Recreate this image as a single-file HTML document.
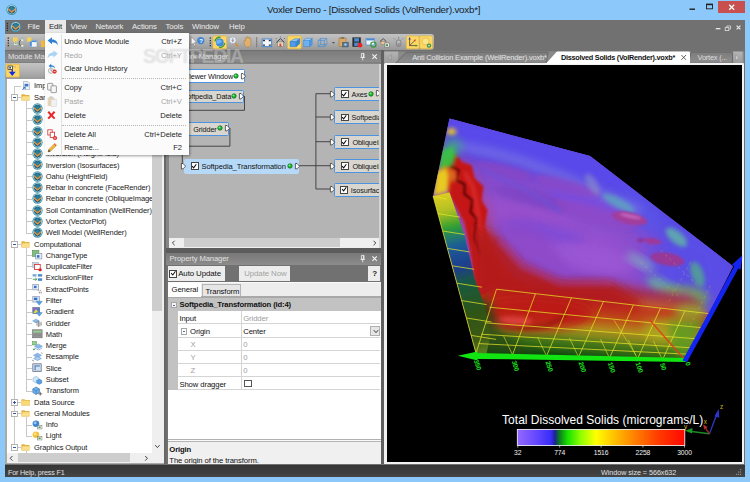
<!DOCTYPE html>
<html>
<head>
<meta charset="utf-8">
<title>Voxler Demo - [Dissolved Solids (VolRender).voxb*]</title>
<style>
html,body{margin:0;padding:0;background:#8cc8f9;}
body{width:750px;height:482px;overflow:hidden;position:relative;font-family:"Liberation Sans",sans-serif;font-size:7.5px;letter-spacing:-0.1px;color:#1a1a1a;}
#win{position:absolute;left:0;top:0;width:750px;height:482px;background:#8cc8f9;overflow:hidden;}
.abs{position:absolute;}
.t{position:absolute;white-space:nowrap;line-height:10px;height:10px;margin-top:0.7px;}
svg{position:absolute;overflow:visible;}
#client{position:absolute;left:5px;top:19.5px;width:740px;height:457px;background:#717171;}
#title{position:absolute;left:267px;top:3px;font-size:9.8px;letter-spacing:-0.22px;line-height:13px;color:#1c1c1c;white-space:nowrap;}
#menubar .t{color:#ececec;top:21.5px;font-size:7.8px;letter-spacing:-0.1px;}
#toolbar{position:absolute;left:5px;top:34px;width:429px;height:16px;background:linear-gradient(#c2c2c2,#b0b0b0 50%,#989898);border-radius:0 3px 3px 0;}
.ptitle{position:absolute;height:13.4px;background:linear-gradient(#686868 0,#7c7c7c 10%,#8c8c8c 92%,#727272 100%);}
.ptitle .t{top:1.4px;color:#e2e2e2;font-size:7.6px;}
#status{position:absolute;left:5px;top:464.5px;width:740px;height:12.2px;background:linear-gradient(#343434,#454545);}
#status .t{color:#e0e0e0;top:1.5px;}
/* tree */
#tree{position:absolute;left:7px;top:79px;width:145px;height:373.5px;background:#fff;overflow:hidden;}
#tree .t{color:#1a1a1a;}
.ln{position:absolute;background:#c8c8c8;}
.exp{position:absolute;width:4.5px;height:4.5px;border:0.6px solid #b4b4b4;background:#fff;}
.exp i{position:absolute;left:1px;top:1.95px;width:2.5px;height:0.7px;background:#3a55a0;}
.exp b{position:absolute;left:1.9px;top:1px;width:0.7px;height:2.5px;background:#3a55a0;}
/* nodes */
.node{position:absolute;height:11.5px;border:0.8px solid #4d94e0;border-radius:1.5px;background:#d9d6cf;}
.node .t{top:1px;color:#111;font-size:7.25px;}
.cb{position:absolute;width:6.2px;height:5.8px;border:0.6px solid #444;background:#fff;}
/* prop grid */
.prow{position:absolute;left:178px;width:202px;height:13.2px;border-bottom:0.6px solid #d4d4d4;box-sizing:border-box;background:#fff;}
/* menu */
#editmenu{position:absolute;left:45px;top:33px;width:144.4px;height:122.4px;background:#fbfbfb;box-shadow:1.2px 1.2px 2.5px rgba(0,0,0,0.4);}
#editmenu .t{color:#1e1e1e;font-size:7.6px;letter-spacing:-0.05px;}
#editmenu .dis{color:#a6a6a6;}
.msep{position:absolute;left:17px;width:124px;height:0;border-top:0.7px dotted #b8b8b8;}
</style>
</head>
<body>
<div id="win">
<div id="title">Voxler Demo - [Dissolved Solids (VolRender).voxb*]</div>
<div class="abs" style="left:717.6px;top:0.8px;width:27.8px;height:12px;background:#c8504e;"></div>
<svg style="left:0;top:0" width="750" height="20" viewBox="0 0 750 20"><rect x="689.5" y="8.5" width="5.5" height="1.4" fill="#1e1e1e"/><rect x="706.5" y="4.2" width="6" height="4.6" fill="none" stroke="#1e1e1e" stroke-width="0.9"/><rect x="706.2" y="3.8" width="6.6" height="1.4" fill="#1e1e1e"/><path d="M729.2 4.8l5 5M734.2 4.8l-5 5" stroke="#fff" stroke-width="1.3" fill="none"/></svg>
<div id="client"></div>
<svg width="0" height="0" style="left:0;top:0"><defs>
<symbol id="logo" viewBox="0 0 12 12"><circle cx="6" cy="6" r="5.6" fill="#3b93a9"/><circle cx="6" cy="6" r="4.7" fill="#cfe6ec"/><circle cx="6" cy="6" r="4" fill="#1f5d80"/><path d="M6 1.9L9.6 5.4 6 8.4 2.4 5.4z" fill="#2a7f9c"/><path d="M2.2 4.3L6 7.6 9.8 4.3 9.8 6.2 6 9.6 2.2 6.2z" fill="#ec9338"/><path d="M3.4 8.2L6 10.3 8.6 8.2 6 10.9z" fill="#173f66"/></symbol>
<symbol id="fold" viewBox="0 0 10 8"><path d="M0.4 1.2h3.2l0.8 0.9h5v5.5h-9z" fill="#e8b84a"/><path d="M0.4 2.9h9v4.7h-9z" fill="#f8d978"/><path d="M0.4 7.6h9" stroke="#d9a437" stroke-width="0.5"/></symbol>
<symbol id="foldo" viewBox="0 0 10 8"><path d="M0.4 1.2h3.2l0.8 0.9h4.4v5.5h-8.4z" fill="#e3b043"/><path d="M1.6 3.4h8.2l-1.2 4.2h-8.2z" fill="#fbe08a"/><path d="M0.4 7.6h8.2" stroke="#d9a437" stroke-width="0.5"/></symbol>
<symbol id="m1" viewBox="0 0 11 10"><rect x="0.5" y="0.5" width="6.5" height="6" fill="#7fbf7a" stroke="#4d8a48" stroke-width="0.6"/><rect x="3.8" y="3.4" width="6.3" height="5.8" fill="#e8eef8" stroke="#6f7f95" stroke-width="0.6"/><rect x="5" y="5.2" width="2.6" height="2.6" fill="#2f6fd0"/></symbol>
<symbol id="m2" viewBox="0 0 11 10"><rect x="0.6" y="0.6" width="6" height="5" fill="#c9d6e8" stroke="#8b9bb3" stroke-width="0.5"/><rect x="2.6" y="2.6" width="5.8" height="5" fill="#fff" stroke="#d83a3a" stroke-width="0.9"/><circle cx="8.3" cy="8" r="1.7" fill="#e02020"/></symbol>
<symbol id="m3" viewBox="0 0 11 10"><rect x="0.6" y="1.2" width="4" height="2.4" fill="#7aa7d8"/><rect x="6" y="1.2" width="4.4" height="2.4" fill="#4f86c9"/><rect x="6" y="5.4" width="4.4" height="2.6" fill="#4f86c9"/><path d="M0.8 6.4h4M3.4 5l1.6 1.4-1.6 1.4" stroke="#3a9a45" stroke-width="0.9" fill="none"/></symbol>
<symbol id="m4" viewBox="0 0 11 10"><rect x="0.8" y="0.6" width="5.8" height="5.4" fill="#e4ebf5" stroke="#7c8aa0" stroke-width="0.6"/><rect x="2" y="1.8" width="2.6" height="2.4" fill="#2f6fd0"/><path d="M6 6.5h1M8 6.5h1M7.5 7.8v2M9.3 7.8v2" stroke="#555" stroke-width="0.7"/></symbol>
<symbol id="m5" viewBox="0 0 11 10"><rect x="0.8" y="0.6" width="6.8" height="5.6" fill="#d8e2f0" stroke="#7c8aa0" stroke-width="0.6"/><rect x="2" y="1.7" width="3.4" height="2.4" fill="#2f6fd0"/><path d="M4.2 5.4h6.4L7.4 9.4z" fill="#5aa0e0" stroke="#3b78ba" stroke-width="0.4"/></symbol>
<symbol id="m6" viewBox="0 0 11 10"><rect x="0.8" y="0.6" width="7" height="6" fill="#5a7fc0" stroke="#50607a" stroke-width="0.6"/><path d="M1.4 6l2.6-4 3 4z" fill="#e8d84a"/><rect x="1.4" y="1.2" width="2.4" height="2" fill="#b05ac8"/><path d="M4.4 5.6h6.2L7.5 9.4z" fill="#5aa0e0" stroke="#3b78ba" stroke-width="0.4"/></symbol>
<symbol id="m7" viewBox="0 0 11 10"><path d="M0.6 3l3.4-2 3.4 2-3.4 2z" fill="#8bbbe8" stroke="#5a8cc4" stroke-width="0.4"/><path d="M5.2 3.6v4.4M6.6 2.8v6.4M8 3.4v5.2M9.4 4.4v3.2" stroke="#666" stroke-width="0.7"/></symbol>
<symbol id="m8" viewBox="0 0 11 10"><rect x="0.6" y="0.8" width="9.8" height="8.2" fill="#9a9a9a" stroke="#666" stroke-width="0.6"/><rect x="1.4" y="1.8" width="8.2" height="1.8" fill="#8fd08a"/><path d="M1.2 5.2h8.6M1.2 7h8.6" stroke="#777" stroke-width="0.6"/></symbol>
<symbol id="m9" viewBox="0 0 11 10"><rect x="0.6" y="0.6" width="4" height="3.4" fill="#8fd08a" stroke="#4d8a48" stroke-width="0.5"/><path d="M2.6 5.4l4-2.2 4 2.2-4 2.2z" fill="#8bbbe8" stroke="#4f86c9" stroke-width="0.5"/><path d="M2.6 7l4 2.2 4-2.2" fill="none" stroke="#4f86c9" stroke-width="0.6"/><path d="M1 8.6h2M2 7.6v2" stroke="#2a8a35" stroke-width="0.7"/></symbol>
<symbol id="m10" viewBox="0 0 11 10"><path d="M1.6 3.4l4-2.2 4 2.2-4 2.2z" fill="#8bbbe8" stroke="#4f86c9" stroke-width="0.5"/><path d="M1.6 6.6l4-2.2 4 2.2-4 2.2z" fill="#a9cdf0" stroke="#4f86c9" stroke-width="0.5"/><path d="M0.6 8l0.8 1.6M9.6 0.6l1 1.2" stroke="#333" stroke-width="0.7"/></symbol>
<symbol id="m11" viewBox="0 0 11 10"><rect x="0.8" y="0.8" width="8.6" height="8" fill="#d0d6e0" stroke="#5c6880" stroke-width="0.7"/><rect x="2.6" y="2.4" width="5.4" height="5" fill="#4f86c9"/><rect x="3.8" y="3.6" width="4.4" height="4" fill="#cfe0f4"/></symbol>
<symbol id="m12" viewBox="0 0 11 10"><path d="M1 3l3-1.8 3 1.8v3.4l-3 1.8-3-1.8z" fill="#cfe4f6" stroke="#7fb0dc" stroke-width="0.5"/><path d="M4.8 5.6l2.6-1.4 2.6 1.4v2.6L7.4 9.6 4.8 8.2z" fill="#5aa0e0" stroke="#3b78ba" stroke-width="0.5"/></symbol>
<symbol id="m13" viewBox="0 0 11 10"><path d="M0.8 3l3.4-2 3.4 2v3.6l-3.4 2-3.4-2z" fill="#6fb0e6" stroke="#2f6fb0" stroke-width="0.6"/><path d="M0.8 3l3.4 2 3.4-2M4.2 5v3.6" stroke="#2f6fb0" stroke-width="0.5" fill="none"/><path d="M6.4 8h4M8.4 6v4" stroke="#333" stroke-width="0.7"/></symbol>
<symbol id="m14" viewBox="0 0 11 10"><circle cx="4" cy="3.8" r="3.4" fill="#3f86d0"/><circle cx="3.2" cy="3" r="1.4" fill="#9cc8f0"/><rect x="5.6" y="5.4" width="4.6" height="3.8" fill="#f4f4f4" stroke="#666" stroke-width="0.5"/><rect x="6.6" y="6.6" width="2.2" height="1.6" fill="#4a9a50"/></symbol>
<symbol id="m15" viewBox="0 0 11 10"><circle cx="4" cy="3.8" r="3.4" fill="#f2c23a"/><circle cx="3.2" cy="3" r="1.4" fill="#fbe28a"/><rect x="5.6" y="5.4" width="4.6" height="3.8" fill="#f4f4f4" stroke="#666" stroke-width="0.5"/><rect x="6.6" y="6.6" width="2.2" height="1.6" fill="#4a9a50"/></symbol>
<symbol id="imp" viewBox="0 0 9 10"><path d="M1.6 0.5h4.6l2 2v6.8h-6.6z" fill="#eef2f8" stroke="#8c9ab0" stroke-width="0.6"/><rect x="2.8" y="3" width="4" height="2.8" fill="#3b78c8"/><path d="M0.4 9.2l3-2.6M3.4 8.6V6.6H1.4" stroke="#2f6fd0" stroke-width="1" fill="none"/></symbol>
</defs></svg>
<div id="menubar">
<div class="abs" style="left:44.5px;top:20px;width:21.5px;height:13.5px;background:#e9e9e9;"></div>
<svg style="left:6px;top:21.5px" width="3" height="10" viewBox="0 0 3 10"><path d="M1.4 1v8" stroke="#2a2a2a" stroke-width="1.2" stroke-dasharray="1.3 1"/></svg>
<svg style="left:10px;top:20.8px" width="11.4" height="11.4"><use href="#logo" width="11.4" height="11.4"/></svg>
<span class="t" style="left:27.5px">File</span>
<span class="t" style="left:70.5px">View</span>
<span class="t" style="left:95.5px">Network</span>
<span class="t" style="left:132px">Actions</span>
<span class="t" style="left:165.5px">Tools</span>
<span class="t" style="left:192px">Window</span>
<span class="t" style="left:229px">Help</span>
<span class="t" style="left:49px;color:#1a1a1a">Edit</span>
</div>
<svg style="left:6px;top:4.2px" width="11.4" height="11.4"><use href="#logo" width="11.4" height="11.4"/></svg>
<svg style="left:712px;top:22px" width="32" height="12" viewBox="712 22 32 12"><rect x="715.8" y="28" width="4.6" height="1.3" fill="#e8e8e8"/><rect x="725.2" y="27.6" width="3.6" height="3" fill="none" stroke="#e0e0e0" stroke-width="0.8"/><path d="M726.8 27.4v-1.4h3.8v3h-1.6" fill="none" stroke="#e0e0e0" stroke-width="0.8"/><path d="M736.6 25.6l3.8 3.8M740.4 25.6l-3.8 3.8" stroke="#ececec" stroke-width="1.1"/></svg>
<div id="toolbar"></div>
<svg style="left:0;top:30px" width="440" height="24" viewBox="0 30 440 24">
<path d="M8.3 37.4v9.4" stroke="#2c2c2c" stroke-width="1.3" stroke-dasharray="1.4 1.1"/>
<rect x="13" y="37.4" width="4.6" height="4.2" fill="#f6d254"/><rect x="13.8" y="42.4" width="3.8" height="2.8" fill="#eef5ee" stroke="#8a9a8a" stroke-width="0.4"/><rect x="14.6" y="43.3" width="2.2" height="0.9" fill="#4f9f55"/><path d="M21 40.2c-2.2 0-2.2 5.6 0 5.6" fill="none" stroke="#555" stroke-width="0.9"/><rect x="21" y="39" width="2.6" height="2.4" fill="#e8f0e8" stroke="#8a9a8a" stroke-width="0.4"/><rect x="21" y="44.6" width="2.6" height="2.4" fill="#e8f0e8" stroke="#8a9a8a" stroke-width="0.4"/>
<rect x="29.4" y="40.2" width="7.6" height="6.8" fill="#f2f6fb" stroke="#8a93a3" stroke-width="0.6"/><rect x="29.8" y="40.5" width="6.8" height="1.6" fill="#4a90e0"/><rect x="29.8" y="42" width="2" height="4.6" fill="#4a90e0"/><rect x="27" y="37.4" width="4.4" height="4.2" fill="#f6d254"/>
<rect x="41" y="40.5" width="4" height="6.5" fill="#f0b840"/>
<path d="M191.2 36.8v8.2l2-1.8 1.4 3 1.2-0.6-1.4-2.9h2.6z" fill="#f4f4f4" stroke="#555" stroke-width="0.4"/>
<circle cx="200.8" cy="40.6" r="3.6" fill="#3f86d4"/><text x="199.2" y="42.8" font-size="6" font-weight="bold" fill="#fff" font-family="Liberation Sans,sans-serif">?</text>
<path d="M210.3 37.4v9.4" stroke="#2c2c2c" stroke-width="1.3" stroke-dasharray="1.4 1.1"/>
<rect x="213" y="35.9" width="13.6" height="12.9" rx="1.2" fill="#fdd765" stroke="#e2b63c" stroke-width="0.7"/>
<circle cx="219.8" cy="42.4" r="3.9" fill="#3f8be0"/><path d="M216.6 40.8c1.6-1.6 4-1.4 5.4 0.4c-1.2 2-3.6 3.2-5.6 2.2z" fill="#6fb4f2"/><path d="M215 41.6c0-3 3-4.8 5.6-4.2M224.6 43c0 3-3 4.8-5.6 4.2" stroke="#2f9a3d" stroke-width="1.3" fill="none"/>
<path d="M234.6 42.6l3.6 4.2" stroke="#d98a30" stroke-width="1.6"/><circle cx="232.8" cy="40.2" r="3.4" fill="#f2f6fa" stroke="#9aa4b4" stroke-width="0.8"/><path d="M232.8 38.2v1.2M232.8 41v1.2M231.4 40.2h2.8" stroke="#445" stroke-width="0.7"/>
<path d="M244 42.2c-1-1.4 0.6-2.2 1.4-1v-3c0-1 1.4-1 1.4 0v-0.8c0-1 1.4-1 1.4 0v0.6c0-1 1.4-1 1.4 0v0.8c0-0.9 1.3-0.9 1.3 0v4.6c0 2-1 3.6-3.4 3.6s-2.6-1.6-3.5-4.8z" fill="#e0b070" stroke="#a87838" stroke-width="0.5"/>
<path d="M256.7 37v10.4" stroke="#666" stroke-width="0.7"/>
<rect x="262.2" y="39" width="9.4" height="7.6" fill="#f4f8fc" stroke="#4a88d0" stroke-width="1"/><path d="M263 39.8h2v1.4h-2zM268.8 39.8h2v1.4h-2zM263 44.4h2v1.4h-2zM268.8 44.4h2v1.4h-2z" fill="#333"/>
<path d="M276.4 42.4l4-3.8 4 3.8" fill="none" stroke="#444" stroke-width="1"/><rect x="277.6" y="42" width="5.6" height="4.6" fill="#f0e0c8" stroke="#7a6a58" stroke-width="0.5"/><rect x="279.4" y="43.6" width="2" height="3" fill="#c84a30"/><path d="M275.6 38l1 1M285 38l-1 1M280.4 36.4v1.2" stroke="#555" stroke-width="0.6"/>
<rect x="287.6" y="35.9" width="13.6" height="12.9" rx="1.2" fill="#fdd765" stroke="#e2b63c" stroke-width="0.7"/>
<path d="M290 41.6l4.6-2.8h5.2l-3.6 2.8z" fill="#8fc4f4" stroke="#2f78c8" stroke-width="0.5"/><path d="M290 41.6h6.2v5.2h-6.2z" fill="#4f9be6" stroke="#2f78c8" stroke-width="0.5"/><path d="M296.2 41.6l3.6-2.8v4.6l-3.6 3.4z" fill="#3a84d4" stroke="#2f78c8" stroke-width="0.5"/>
<path d="M303.6 40.4l2.4-2h6.2l-2.4 2z" fill="#a8d2f8" stroke="#3a84d4" stroke-width="0.5"/><path d="M303.6 40.4h6.2v6.2h-6.2z" fill="#6fb0ee" stroke="#3a84d4" stroke-width="0.5"/><path d="M309.8 40.4l2.4-2v6.2l-2.4 2z" fill="#4f9be6" stroke="#3a84d4" stroke-width="0.5"/>
<path d="M318.2 40.4h6.2v6.2h-6.2zM320.6 38.4h6.2v6.2h-6.2zM318.2 40.4l2.4-2M324.4 40.4l2.4-2M318.2 46.6l2.4-2M324.4 46.6l2.4-2" fill="none" stroke="#4a90d8" stroke-width="0.7"/>
<path d="M331.8 42l1.6 1.8 1.6-1.8z" fill="#555"/>
<rect x="339" y="38" width="7" height="8.6" fill="#d9a860" stroke="#9a7030" stroke-width="0.5"/><rect x="340.8" y="37" width="3.4" height="1.8" fill="#777"/><rect x="342.4" y="42.2" width="6" height="4.8" fill="#5a7690" stroke="#3a4a5c" stroke-width="0.4"/><circle cx="345.4" cy="44.6" r="1.3" fill="#9cc4e8"/>
<rect x="352.4" y="37.4" width="8.4" height="9.4" fill="#2c2c2c"/><rect x="354.2" y="38.2" width="4.8" height="3.4" fill="#4a88d0"/><rect x="354.2" y="42.6" width="4.8" height="3.4" fill="#4a88d0"/><circle cx="360" cy="45.2" r="2.4" fill="#e8262a"/>
<rect x="366" y="38.6" width="8.6" height="6.4" fill="#f0f5fb" stroke="#4a88d0" stroke-width="0.7"/><rect x="366.4" y="38.8" width="7.8" height="1.6" fill="#4a88d0"/><circle cx="373.4" cy="44.6" r="2.6" fill="none" stroke="#2f9a3d" stroke-width="1.2"/>
<path d="M380 41.6l3.2-3 3.2 3" fill="none" stroke="#444" stroke-width="0.9"/><rect x="381" y="41.2" width="4.4" height="3.4" fill="#e8c8a0" stroke="#7a5a40" stroke-width="0.4"/><rect x="384.6" y="43" width="4.6" height="4" fill="#f4f4f4" stroke="#666" stroke-width="0.5"/><rect x="385.6" y="44.2" width="2.4" height="1.8" fill="#3f9a48"/>
<rect x="396.4" y="40" width="4.4" height="6.4" rx="1.6" fill="#b8b8b8" stroke="#666" stroke-width="0.6"/><path d="M394 38.4l1 1M403.2 38.4l-1 1M398.6 37v1.6" stroke="#555" stroke-width="0.6"/><rect x="397.4" y="43.4" width="2.4" height="2.2" fill="#888"/>
<rect x="406.3" y="35.9" width="12.8" height="12.9" rx="1.2" fill="#fdd765" stroke="#e2b63c" stroke-width="0.7"/>
<path d="M409.6 45.6v-8M409.6 45.6h7.6M409.6 45.6l5.6-5.4" stroke="#333" stroke-width="0.7"/><path d="M408.4 39.4l1.2-2.2 1.2 2.2z" fill="#2040c0"/><path d="M415.6 44.4l2.2 1.2-2.2 1.2z" fill="#2f9a3d"/><path d="M413.6 40l2.2-0.6-0.6 2.2z" fill="#d03030"/>
<rect x="419.8" y="35.9" width="12.8" height="12.9" rx="1.2" fill="#fdd765" stroke="#e2b63c" stroke-width="0.7"/>
<circle cx="425.6" cy="41.4" r="3.6" fill="#fbe38c" stroke="#e8b93c" stroke-width="0.8"/><circle cx="429" cy="45.6" r="2.2" fill="#2f8a3a"/><path d="M427.8 45.6h2.4M429 44.4v2.4" stroke="#fff" stroke-width="0.6"/>
</svg>
<div class="abs" style="left:5px;top:63px;width:158.7px;height:400.5px;background:#a9a9a9;"></div><div class="abs" style="left:5px;top:63.2px;width:158.7px;height:15.4px;background:linear-gradient(#c4c4c4,#b2b2b2 50%,#9a9a9a);"></div>
<div class="ptitle" style="left:5px;top:50px;width:158.7px;"><span class="t" style="left:3px">Module Manager</span></div>
<svg style="left:5px;top:63px" width="20" height="16" viewBox="5 63 20 16"><rect x="6" y="64.2" width="13.4" height="12.8" rx="1.2" fill="#fdd765" stroke="#e2b63c" stroke-width="0.7"/><rect x="8" y="66" width="4.4" height="3.4" fill="#fff" stroke="#222" stroke-width="0.7"/><rect x="9.4" y="66.8" width="1.4" height="1.8" fill="#222"/><path d="M13.4 66.8h2.4" stroke="#888" stroke-width="0.6"/><path d="M12.2 69.6v3.6M10.2 72.4l2 2.4 2-2.4z" stroke="#1030e0" stroke-width="1.4" fill="#1030e0"/></svg>
<div id="tree">
<div class="ln" style="left:7.1px;top:7.00px;width:0.7px;height:361.28px"></div>
<div class="ln" style="left:18.9px;top:22.29px;width:0.7px;height:131.48px"></div>
<div class="ln" style="left:18.9px;top:169.06px;width:0.7px;height:142.77px"></div>
<div class="ln" style="left:18.9px;top:338.41px;width:0.7px;height:18.58px"></div>
<div class="ln" style="left:18.9px;top:372.28px;width:0.7px;height:7.29px"></div>
<div class="ln" style="left:7.1px;top:6.80px;width:7px;height:0.7px"></div>
<svg style="left:14.8px;top:2.20px" width="8.4" height="9.4"><use href="#imp" width="8.4" height="9.4"/></svg>
<span class="t" style="left:27.1px;top:1.80px">Import...</span>
<div class="ln" style="left:7.1px;top:18.09px;width:7px;height:0.7px"></div>
<div class="exp" style="left:4.300000000000001px;top:15.39px"><i></i></div>
<svg style="left:14.3px;top:14.09px" width="9.6" height="7.8"><use href="#foldo" width="9.6" height="7.8"/></svg>
<span class="t" style="left:27.1px;top:13.09px">Samples</span>
<div class="ln" style="left:18.9px;top:29.38px;width:6.5px;height:0.7px"></div>
<svg style="left:25px;top:23.98px" width="11" height="11"><use href="#logo" width="11" height="11"/></svg>
<span class="t" style="left:38.8px;top:24.38px">Anti Collision Example (WellRender)</span>
<div class="ln" style="left:18.9px;top:40.67px;width:6.5px;height:0.7px"></div>
<svg style="left:25px;top:35.27px" width="11" height="11"><use href="#logo" width="11" height="11"/></svg>
<span class="t" style="left:38.8px;top:35.67px">Dissolved Solids (VolRender)</span>
<div class="ln" style="left:18.9px;top:51.96px;width:6.5px;height:0.7px"></div>
<svg style="left:25px;top:46.56px" width="11" height="11"><use href="#logo" width="11" height="11"/></svg>
<span class="t" style="left:38.8px;top:46.96px">Gold Concentration (ScatterPlot)</span>
<div class="ln" style="left:18.9px;top:63.25px;width:6.5px;height:0.7px"></div>
<svg style="left:25px;top:57.85px" width="11" height="11"><use href="#logo" width="11" height="11"/></svg>
<span class="t" style="left:38.8px;top:58.25px">Helium Concentration (Contours)</span>
<div class="ln" style="left:18.9px;top:74.54px;width:6.5px;height:0.7px"></div>
<svg style="left:25px;top:69.14px" width="11" height="11"><use href="#logo" width="11" height="11"/></svg>
<span class="t" style="left:38.8px;top:69.54px">Inversion (HeightField)</span>
<div class="ln" style="left:18.9px;top:85.83px;width:6.5px;height:0.7px"></div>
<svg style="left:25px;top:80.43px" width="11" height="11"><use href="#logo" width="11" height="11"/></svg>
<span class="t" style="left:38.8px;top:80.83px">Inversion (Isosurfaces)</span>
<div class="ln" style="left:18.9px;top:97.12px;width:6.5px;height:0.7px"></div>
<svg style="left:25px;top:91.72px" width="11" height="11"><use href="#logo" width="11" height="11"/></svg>
<span class="t" style="left:38.8px;top:92.12px">Oahu (HeightField)</span>
<div class="ln" style="left:18.9px;top:108.41px;width:6.5px;height:0.7px"></div>
<svg style="left:25px;top:103.01px" width="11" height="11"><use href="#logo" width="11" height="11"/></svg>
<span class="t" style="left:38.8px;top:103.41px">Rebar in concrete (FaceRender)</span>
<div class="ln" style="left:18.9px;top:119.70px;width:6.5px;height:0.7px"></div>
<svg style="left:25px;top:114.30px" width="11" height="11"><use href="#logo" width="11" height="11"/></svg>
<span class="t" style="left:38.8px;top:114.70px">Rebar in concrete (ObliqueImage)</span>
<div class="ln" style="left:18.9px;top:130.99px;width:6.5px;height:0.7px"></div>
<svg style="left:25px;top:125.59px" width="11" height="11"><use href="#logo" width="11" height="11"/></svg>
<span class="t" style="left:38.8px;top:125.99px">Soil Contamination (WellRender)</span>
<div class="ln" style="left:18.9px;top:142.28px;width:6.5px;height:0.7px"></div>
<svg style="left:25px;top:136.88px" width="11" height="11"><use href="#logo" width="11" height="11"/></svg>
<span class="t" style="left:38.8px;top:137.28px">Vortex (VectorPlot)</span>
<div class="ln" style="left:18.9px;top:153.57px;width:6.5px;height:0.7px"></div>
<svg style="left:25px;top:148.17px" width="11" height="11"><use href="#logo" width="11" height="11"/></svg>
<span class="t" style="left:38.8px;top:148.57px">Well Model (WellRender)</span>
<div class="ln" style="left:7.1px;top:164.86px;width:7px;height:0.7px"></div>
<div class="exp" style="left:4.300000000000001px;top:162.16px"><i></i></div>
<svg style="left:14.3px;top:160.86px" width="9.6" height="7.8"><use href="#foldo" width="9.6" height="7.8"/></svg>
<span class="t" style="left:27.1px;top:159.86px">Computational</span>
<div class="ln" style="left:18.9px;top:176.15px;width:6.5px;height:0.7px"></div>
<svg style="left:25.200000000000003px;top:171.45px" width="10.8" height="9.8"><use href="#m1" width="10.8" height="9.8"/></svg>
<span class="t" style="left:38.8px;top:171.15px">ChangeType</span>
<div class="ln" style="left:18.9px;top:187.44px;width:6.5px;height:0.7px"></div>
<svg style="left:25.200000000000003px;top:182.74px" width="10.8" height="9.8"><use href="#m2" width="10.8" height="9.8"/></svg>
<span class="t" style="left:38.8px;top:182.44px">DuplicateFilter</span>
<div class="ln" style="left:18.9px;top:198.73px;width:6.5px;height:0.7px"></div>
<svg style="left:25.200000000000003px;top:194.03px" width="10.8" height="9.8"><use href="#m3" width="10.8" height="9.8"/></svg>
<span class="t" style="left:38.8px;top:193.73px">ExclusionFilter</span>
<div class="ln" style="left:18.9px;top:210.02px;width:6.5px;height:0.7px"></div>
<svg style="left:25.200000000000003px;top:205.32px" width="10.8" height="9.8"><use href="#m4" width="10.8" height="9.8"/></svg>
<span class="t" style="left:38.8px;top:205.02px">ExtractPoints</span>
<div class="ln" style="left:18.9px;top:221.31px;width:6.5px;height:0.7px"></div>
<svg style="left:25.200000000000003px;top:216.61px" width="10.8" height="9.8"><use href="#m5" width="10.8" height="9.8"/></svg>
<span class="t" style="left:38.8px;top:216.31px">Filter</span>
<div class="ln" style="left:18.9px;top:232.60px;width:6.5px;height:0.7px"></div>
<svg style="left:25.200000000000003px;top:227.90px" width="10.8" height="9.8"><use href="#m6" width="10.8" height="9.8"/></svg>
<span class="t" style="left:38.8px;top:227.60px">Gradient</span>
<div class="ln" style="left:18.9px;top:243.89px;width:6.5px;height:0.7px"></div>
<svg style="left:25.200000000000003px;top:239.19px" width="10.8" height="9.8"><use href="#m7" width="10.8" height="9.8"/></svg>
<span class="t" style="left:38.8px;top:238.89px">Gridder</span>
<div class="ln" style="left:18.9px;top:255.18px;width:6.5px;height:0.7px"></div>
<svg style="left:25.200000000000003px;top:250.48px" width="10.8" height="9.8"><use href="#m8" width="10.8" height="9.8"/></svg>
<span class="t" style="left:38.8px;top:250.18px">Math</span>
<div class="ln" style="left:18.9px;top:266.47px;width:6.5px;height:0.7px"></div>
<svg style="left:25.200000000000003px;top:261.77px" width="10.8" height="9.8"><use href="#m9" width="10.8" height="9.8"/></svg>
<span class="t" style="left:38.8px;top:261.47px">Merge</span>
<div class="ln" style="left:18.9px;top:277.76px;width:6.5px;height:0.7px"></div>
<svg style="left:25.200000000000003px;top:273.06px" width="10.8" height="9.8"><use href="#m10" width="10.8" height="9.8"/></svg>
<span class="t" style="left:38.8px;top:272.76px">Resample</span>
<div class="ln" style="left:18.9px;top:289.05px;width:6.5px;height:0.7px"></div>
<svg style="left:25.200000000000003px;top:284.35px" width="10.8" height="9.8"><use href="#m11" width="10.8" height="9.8"/></svg>
<span class="t" style="left:38.8px;top:284.05px">Slice</span>
<div class="ln" style="left:18.9px;top:300.34px;width:6.5px;height:0.7px"></div>
<svg style="left:25.200000000000003px;top:295.64px" width="10.8" height="9.8"><use href="#m12" width="10.8" height="9.8"/></svg>
<span class="t" style="left:38.8px;top:295.34px">Subset</span>
<div class="ln" style="left:18.9px;top:311.63px;width:6.5px;height:0.7px"></div>
<svg style="left:25.200000000000003px;top:306.93px" width="10.8" height="9.8"><use href="#m13" width="10.8" height="9.8"/></svg>
<span class="t" style="left:38.8px;top:306.63px">Transform</span>
<div class="ln" style="left:7.1px;top:322.92px;width:7px;height:0.7px"></div>
<div class="exp" style="left:4.300000000000001px;top:320.22px"><i></i><b></b></div>
<svg style="left:14.3px;top:318.92px" width="9.6" height="7.8"><use href="#fold" width="9.6" height="7.8"/></svg>
<span class="t" style="left:27.1px;top:317.92px">Data Source</span>
<div class="ln" style="left:7.1px;top:334.21px;width:7px;height:0.7px"></div>
<div class="exp" style="left:4.300000000000001px;top:331.51px"><i></i></div>
<svg style="left:14.3px;top:330.21px" width="9.6" height="7.8"><use href="#foldo" width="9.6" height="7.8"/></svg>
<span class="t" style="left:27.1px;top:329.21px">General Modules</span>
<div class="ln" style="left:18.9px;top:345.50px;width:6.5px;height:0.7px"></div>
<svg style="left:25.200000000000003px;top:340.80px" width="10.8" height="9.8"><use href="#m14" width="10.8" height="9.8"/></svg>
<span class="t" style="left:38.8px;top:340.50px">Info</span>
<div class="ln" style="left:18.9px;top:356.79px;width:6.5px;height:0.7px"></div>
<svg style="left:25.200000000000003px;top:352.09px" width="10.8" height="9.8"><use href="#m15" width="10.8" height="9.8"/></svg>
<span class="t" style="left:38.8px;top:351.79px">Light</span>
<div class="ln" style="left:7.1px;top:368.08px;width:7px;height:0.7px"></div>
<div class="exp" style="left:4.300000000000001px;top:365.38px"><i></i></div>
<svg style="left:14.3px;top:364.08px" width="9.6" height="7.8"><use href="#foldo" width="9.6" height="7.8"/></svg>
<span class="t" style="left:27.1px;top:363.08px">Graphics Output</span>
<div class="ln" style="left:18.9px;top:379.37px;width:6.5px;height:0.7px"></div>
<svg style="left:25.200000000000003px;top:374.67px" width="10.8" height="9.8"><use href="#m1" width="10.8" height="9.8"/></svg>
<span class="t" style="left:38.8px;top:374.37px">Axes</span>
</div>
<div class="abs" style="left:152px;top:79px;width:11.7px;height:373.5px;background:#efefef;"></div>
<div class="abs" style="left:152.3px;top:90px;width:9.6px;height:220.5px;background:#cdcdcd;"></div>
<svg style="left:152px;top:440px" width="12" height="12" viewBox="0 0 12 12"><path d="M3.2 5.2l2.2 2.4 2.2-2.4" fill="none" stroke="#444" stroke-width="1"/></svg>
<div class="abs" style="left:7px;top:452.5px;width:156.7px;height:10.5px;background:#efefef;"></div>
<div class="abs" style="left:17.6px;top:453.2px;width:112.6px;height:9px;background:#cdcdcd;"></div>
<svg style="left:7px;top:452.5px" width="146" height="10.5" viewBox="0 0 146 10.5"><path d="M5.4 3l-2.2 2.3 2.2 2.3" fill="none" stroke="#444" stroke-width="1"/><path d="M138.2 3l2.2 2.3-2.2 2.3" fill="none" stroke="#444" stroke-width="1"/></svg>
<div class="abs" style="left:163.7px;top:50px;width:2.4px;height:414px;background:#686868;"></div>
<div class="abs" style="left:166.1px;top:63px;width:215.1px;height:188px;background:#858585;"></div>
<div class="ptitle" style="left:166.1px;top:50px;width:215.1px;"><span class="t" style="left:3.5px">Network Manager</span></div>
<svg style="left:356px;top:50px" width="26" height="13" viewBox="356 0 26 13"><path d="M361.4 3.4h2.6v4h-2.6zM360.6 7.5h4.2M362.7 7.5v2.8" fill="none" stroke="#f2f2f2" stroke-width="0.8"/><path d="M363.4 3.4v4" stroke="#f2f2f2" stroke-width="0.9"/><path d="M372.4 4.4l4.4 4.4M376.8 4.4l-4.4 4.4" stroke="#f4f4f4" stroke-width="1.1"/></svg>
<div id="net" class="abs" style="left:168.5px;top:64px;width:210.6px;height:173.5px;background:#b4b4b4;overflow:hidden;">
<svg style="left:0;top:0" width="211" height="174" viewBox="168.5 64 211 174"><g fill="none" stroke="#3a3a3a" stroke-width="0.9"><path d="M244 96v14.3h-60"/><path d="M229.4 128v18.2h-50"/><path d="M181.8 146.2v19.6h3"/><path d="M299 165.7h32"/><path d="M331 93.7h-15.6v95.3h15.6M315.4 117h15.6M315.4 141.7h15.6"/></g></svg>
<div class="node" style="left:-48.5px;top:5.3px;width:123.3px;height:11.6px;background:#ffffff;border-color:#4d94e0;"><span class="t" style="left:63.6px;top:1.2px">Viewer Window</span></div>
<svg style="left:64.7px;top:8.7px" width="6" height="6" viewBox="0 0 6 6"><circle cx="3" cy="3" r="2.2" fill="#20c030" stroke="#0a5a14" stroke-width="0.7"/><circle cx="2.4" cy="2.3" r="0.9" fill="#7af088"/></svg>
<svg style="left:72.7px;top:8.5px" width="5" height="6.4" viewBox="0 0 5 6.4"><path d="M0.4 0.5h1.6l2.6 2.7-2.6 2.7h-1.6z" fill="#fff" stroke="#222" stroke-width="0.7"/></svg>
<div class="node" style="left:-48.5px;top:25.6px;width:121.5px;height:11.4px;background:#d9d6cf;border-color:#4d94e0;"><span class="t" style="left:61.6px;top:1.2px">Softpedia_Data</span></div>
<svg style="left:62.5px;top:28.8px" width="6" height="6" viewBox="0 0 6 6"><circle cx="3" cy="3" r="2.2" fill="#20c030" stroke="#0a5a14" stroke-width="0.7"/><circle cx="2.4" cy="2.3" r="0.9" fill="#7af088"/></svg>
<svg style="left:70.7px;top:28.6px" width="5" height="6.4" viewBox="0 0 5 6.4"><path d="M0.4 0.5h1.6l2.6 2.7-2.6 2.7h-1.6z" fill="#fff" stroke="#222" stroke-width="0.7"/></svg>
<div class="node" style="left:-48.5px;top:57.8px;width:106.8px;height:11.8px;background:#d9d6cf;border-color:#4d94e0;"><span class="t" style="left:72.2px;top:1.2px">Gridder</span></div>
<svg style="left:48.1px;top:61.1px" width="6" height="6" viewBox="0 0 6 6"><circle cx="3" cy="3" r="2.2" fill="#20c030" stroke="#0a5a14" stroke-width="0.7"/><circle cx="2.4" cy="2.3" r="0.9" fill="#7af088"/></svg>
<svg style="left:56.3px;top:60.9px" width="5" height="6.4" viewBox="0 0 5 6.4"><path d="M0.4 0.5h1.6l2.6 2.7-2.6 2.7h-1.6z" fill="#fff" stroke="#222" stroke-width="0.7"/></svg>
<div class="node" style="left:15.5px;top:95.2px;width:112.6px;height:12.4px;background:#b7d9f8;border-color:#b7d9f8;"><div class="cb" style="left:5.7px;top:2.3px"></div><svg style="left:6.1px;top:2.7px" width="6.4" height="6.4" viewBox="0 0 7 7"><path d="M1.2 3.4l1.7 1.9 2.9-4" fill="none" stroke="#111" stroke-width="1.15"/></svg><span class="t" style="left:16.6px;top:1.2px;font-size:7.55px">Softpedia_Transformation</span></div>
<svg style="left:118.3px;top:99.0px" width="6" height="6" viewBox="0 0 6 6"><circle cx="3" cy="3" r="2.2" fill="#20c030" stroke="#0a5a14" stroke-width="0.7"/><circle cx="2.4" cy="2.3" r="0.9" fill="#7af088"/></svg>
<svg style="left:126.1px;top:98.8px" width="5" height="6.4" viewBox="0 0 5 6.4"><path d="M0.4 0.5h1.6l2.6 2.7-2.6 2.7h-1.6z" fill="#fff" stroke="#222" stroke-width="0.7"/></svg>
<svg style="left:12.1px;top:98.8px" width="5" height="6.4" viewBox="0 0 5 6.4"><path d="M0.4 0.5h1.6l2.6 2.7-2.6 2.7h-1.6z" fill="#fff" stroke="#222" stroke-width="0.7"/></svg>
<div class="node" style="left:165.5px;top:23.2px;width:48.0px;height:11.8px;background:#d9d6cf;border-color:#4d94e0;"><div class="cb" style="left:5.8px;top:2.3px"></div><svg style="left:6.2px;top:2.7px" width="6.4" height="6.4" viewBox="0 0 7 7"><path d="M1.2 3.4l1.7 1.9 2.9-4" fill="none" stroke="#111" stroke-width="1.15"/></svg><span class="t" style="left:16.6px;top:1.2px">Axes</span></div>
<svg style="left:161.1px;top:26.5px" width="5" height="6.4" viewBox="0 0 5 6.4"><path d="M0.4 0.5h1.6l2.6 2.7-2.6 2.7h-1.6z" fill="#fff" stroke="#222" stroke-width="0.7"/></svg>
<div class="node" style="left:165.5px;top:46.4px;width:70.0px;height:11.8px;background:#d9d6cf;border-color:#4d94e0;"><div class="cb" style="left:5.8px;top:2.3px"></div><svg style="left:6.2px;top:2.7px" width="6.4" height="6.4" viewBox="0 0 7 7"><path d="M1.2 3.4l1.7 1.9 2.9-4" fill="none" stroke="#111" stroke-width="1.15"/></svg><span class="t" style="left:16.6px;top:1.2px">Softpedia_Data 2</span></div>
<svg style="left:161.1px;top:49.7px" width="5" height="6.4" viewBox="0 0 5 6.4"><path d="M0.4 0.5h1.6l2.6 2.7-2.6 2.7h-1.6z" fill="#fff" stroke="#222" stroke-width="0.7"/></svg>
<div class="node" style="left:165.5px;top:71.2px;width:70.0px;height:11.8px;background:#d9d6cf;border-color:#4d94e0;"><div class="cb" style="left:5.8px;top:2.3px"></div><svg style="left:6.2px;top:2.7px" width="6.4" height="6.4" viewBox="0 0 7 7"><path d="M1.2 3.4l1.7 1.9 2.9-4" fill="none" stroke="#111" stroke-width="1.15"/></svg><span class="t" style="left:17.4px;top:1.2px">ObliqueImage</span></div>
<svg style="left:161.1px;top:74.5px" width="5" height="6.4" viewBox="0 0 5 6.4"><path d="M0.4 0.5h1.6l2.6 2.7-2.6 2.7h-1.6z" fill="#fff" stroke="#222" stroke-width="0.7"/></svg>
<div class="node" style="left:165.5px;top:95.2px;width:70.0px;height:11.8px;background:#d9d6cf;border-color:#4d94e0;"><div class="cb" style="left:5.8px;top:2.3px"></div><svg style="left:6.2px;top:2.7px" width="6.4" height="6.4" viewBox="0 0 7 7"><path d="M1.2 3.4l1.7 1.9 2.9-4" fill="none" stroke="#111" stroke-width="1.15"/></svg><span class="t" style="left:17.4px;top:1.2px">ObliqueImage 2</span></div>
<svg style="left:161.1px;top:98.5px" width="5" height="6.4" viewBox="0 0 5 6.4"><path d="M0.4 0.5h1.6l2.6 2.7-2.6 2.7h-1.6z" fill="#fff" stroke="#222" stroke-width="0.7"/></svg>
<div class="node" style="left:165.5px;top:118.8px;width:70.0px;height:11.8px;background:#d9d6cf;border-color:#4d94e0;"><div class="cb" style="left:5.2px;top:2.3px"></div><svg style="left:5.6px;top:2.7px" width="6.4" height="6.4" viewBox="0 0 7 7"><path d="M1.2 3.4l1.7 1.9 2.9-4" fill="none" stroke="#111" stroke-width="1.15"/></svg><span class="t" style="left:15.8px;top:1.2px">Isosurface</span></div>
<svg style="left:161.1px;top:122.1px" width="5" height="6.4" viewBox="0 0 5 6.4"><path d="M0.4 0.5h1.6l2.6 2.7-2.6 2.7h-1.6z" fill="#fff" stroke="#222" stroke-width="0.7"/></svg>
<svg style="left:199.3px;top:26.6px" width="6" height="6" viewBox="0 0 6 6"><circle cx="3" cy="3" r="2.2" fill="#20c030" stroke="#0a5a14" stroke-width="0.7"/><circle cx="2.4" cy="2.3" r="0.9" fill="#7af088"/></svg>
<svg style="left:207.3px;top:26.4px" width="5" height="6.4" viewBox="0 0 5 6.4"><path d="M0.4 0.5h1.6l2.6 2.7-2.6 2.7h-1.6z" fill="#fff" stroke="#222" stroke-width="0.7"/></svg>
</div>
<div class="abs" style="left:379.1px;top:64px;width:1.8px;height:184px;background:#d4d4d4;"></div>
<div class="abs" style="left:168.5px;top:237.5px;width:210.6px;height:10px;background:#efefef;"></div>
<div class="abs" style="left:184px;top:238.2px;width:156px;height:8.8px;background:#cdcdcd;"></div>
<svg style="left:168.5px;top:237.5px" width="211" height="10" viewBox="0 0 211 10"><path d="M5.6 2.8l-2.2 2.2 2.2 2.2" fill="none" stroke="#444" stroke-width="1"/><path d="M204.6 2.8l2.2 2.2-2.2 2.2" fill="none" stroke="#444" stroke-width="1"/></svg>
<div class="abs" style="left:166.1px;top:248px;width:215.1px;height:5px;background:#5c5c5c;"></div>
<div class="abs" style="left:166.1px;top:253px;width:215.1px;height:211px;background:#717171;"></div>
<div class="ptitle" style="left:166.1px;top:252.5px;width:215.1px;height:12.3px;background:linear-gradient(#787878,#8c8c8c)"><span class="t" style="left:3.5px;top:0.6px">Property Manager</span></div>
<svg style="left:356px;top:252.3px" width="26" height="13" viewBox="356 0 26 13"><path d="M361.4 3.4h2.6v4h-2.6zM360.6 7.5h4.2M362.7 7.5v2.8" fill="none" stroke="#f2f2f2" stroke-width="0.8"/><path d="M363.4 3.4v4" stroke="#f2f2f2" stroke-width="0.9"/><path d="M372.4 4.4l4.4 4.4M376.8 4.4l-4.4 4.4" stroke="#f4f4f4" stroke-width="1.1"/></svg>
<div class="abs" style="left:167.6px;top:266.2px;width:57px;height:14.4px;background:#ececec;"><div class="cb" style="left:1.6px;top:3.8px;width:5.8px;height:5.8px"></div><svg style="left:2px;top:4.2px" width="6.6" height="6.6" viewBox="0 0 7 7"><path d="M1.2 3.4l1.7 1.9 2.9-4" fill="none" stroke="#111" stroke-width="1.1"/></svg><span class="t" style="left:10.6px;top:2.3px;font-size:7.9px;color:#111">Auto Update</span></div>
<div class="abs" style="left:239px;top:266.2px;width:51.4px;height:14.4px;background:#ececec;"><span class="t" style="left:5.2px;top:2.3px;font-size:7.9px;color:#a2a2a2">Update Now</span></div>
<div class="abs" style="left:368.2px;top:266.2px;width:12.3px;height:14.4px;background:#ececec;"><span class="t" style="left:4px;top:2.2px;font-size:8px;font-weight:bold;color:#222">?</span></div>
<div class="abs" style="left:167.5px;top:282px;width:213.6px;height:14.6px;background:#ededed;border-top:1px solid #fafafa;box-sizing:border-box"></div>
<div class="abs" style="left:167.5px;top:296.4px;width:213.6px;height:1.6px;background:#a8a8a8;"></div>
<div class="abs" style="left:167.5px;top:282.6px;width:33.8px;height:14.4px;background:#fff;"><span class="t" style="left:4px;top:2px;font-size:7.7px;color:#111">General</span></div>
<div class="abs" style="left:201.5px;top:284.4px;width:39.4px;height:12px;background:#e6e6e6;border:0.7px solid #b4b4b4;border-bottom:none;box-sizing:border-box"><span class="t" style="left:3px;top:0.8px;font-size:7.7px;color:#111">Transform</span></div>
<div class="abs" style="left:167.5px;top:298px;width:213.6px;height:141px;background:#fff;"></div>
<div class="abs" style="left:167.5px;top:298px;width:213.6px;height:13px;background:#c2c2c2;"><span class="t" style="left:12px;top:1.4px;font-weight:bold;font-size:7.7px;letter-spacing:-0.15px;color:#111">Softpedia_Transformation (id:4)</span></div>
<div class="abs" style="left:167.5px;top:311px;width:10.6px;height:79.3px;background:#c2c2c2;"></div>
<div class="exp" style="left:170.6px;top:301.8px;border-color:#a6a6a6;background:#f4f4f4"><i style="background:#5a6a9a"></i></div>
<div class="prow" style="top:311.20px"><span class="t" style="left:1.4px;top:1.8px;font-size:7.7px;color:#111">Input</span><div class="abs" style="left:63px;top:0;width:0.6px;height:13.2px;background:#d4d4d4"></div><span class="t" style="left:65.2px;top:1.8px;font-size:7.7px;color:#9c9c9c">Gridder</span></div>
<div class="prow" style="top:324.38px"><span class="t" style="left:12px;top:1.8px;font-size:7.7px;color:#111">Origin</span><div class="abs" style="left:63px;top:0;width:0.6px;height:13.2px;background:#d4d4d4"></div><span class="t" style="left:65.2px;top:1.8px;font-size:7.7px;color:#111">Center</span><div class="exp" style="left:2.8px;top:3.8px;border-color:#a6a6a6"><i style="background:#5a6a9a"></i></div><div class="abs" style="left:192px;top:1.4px;width:9.6px;height:10.4px;background:#e6e6e6;border:0.6px solid #b0b0b0;box-sizing:border-box"><svg style="left:1.6px;top:2.6px" width="6" height="5" viewBox="0 0 6 5"><path d="M0.8 1.2l2.2 2.4 2.2-2.4" fill="none" stroke="#333" stroke-width="1"/></svg></div></div>
<div class="prow" style="top:337.56px"><span class="t" style="left:12.6px;top:1.8px;font-size:7.7px;color:#a0a0a0">X</span><div class="abs" style="left:63px;top:0;width:0.6px;height:13.2px;background:#d4d4d4"></div><span class="t" style="left:65.2px;top:1.8px;font-size:7.7px;color:#9c9c9c">0</span></div>
<div class="prow" style="top:350.74px"><span class="t" style="left:12.6px;top:1.8px;font-size:7.7px;color:#a0a0a0">Y</span><div class="abs" style="left:63px;top:0;width:0.6px;height:13.2px;background:#d4d4d4"></div><span class="t" style="left:65.2px;top:1.8px;font-size:7.7px;color:#9c9c9c">0</span></div>
<div class="prow" style="top:363.92px"><span class="t" style="left:12.6px;top:1.8px;font-size:7.7px;color:#a0a0a0">Z</span><div class="abs" style="left:63px;top:0;width:0.6px;height:13.2px;background:#d4d4d4"></div><span class="t" style="left:65.2px;top:1.8px;font-size:7.7px;color:#9c9c9c">0</span></div>
<div class="prow" style="top:377.10px"><span class="t" style="left:1.4px;top:1.8px;font-size:7.7px;color:#111">Show dragger</span><div class="abs" style="left:63px;top:0;width:0.6px;height:13.2px;background:#d4d4d4"></div><div class="abs" style="left:66.4px;top:2.6px;width:7.9px;height:7.7px;border:0.7px solid #555;background:#fff;box-sizing:border-box"></div></div>
<div class="abs" style="left:167.5px;top:439px;width:213.6px;height:0.9px;background:#b0b0b0;"></div><div class="abs" style="left:167.5px;top:439.9px;width:213.6px;height:1.6px;background:#fafafa;"></div><div class="abs" style="left:167.5px;top:441.4px;width:213.6px;height:1px;background:#b4b4b4;"></div>
<div class="abs" style="left:167.5px;top:442.4px;width:213.6px;height:21.6px;background:#f0f0f0;overflow:hidden"><span class="t" style="left:1.8px;top:2.2px;font-weight:bold;font-size:7.7px;letter-spacing:-0.15px;color:#111">Origin</span><span class="t" style="left:1.8px;top:13.2px;font-size:7.7px;color:#111">The origin of the transform.</span></div>
<div class="abs" style="left:381.2px;top:50px;width:3px;height:414px;background:#606060;"></div>
<div class="abs" style="left:384.2px;top:50px;width:360.8px;height:14.5px;background:#717171;"></div>
<svg style="left:384px;top:50px" width="361" height="15" viewBox="384 50 361 15">
<defs><linearGradient id="tg" x1="0" y1="0" x2="0" y2="1"><stop offset="0" stop-color="#7c7c7c"/><stop offset="1" stop-color="#8e8e8e"/></linearGradient><linearGradient id="tg2" x1="0" y1="0" x2="0" y2="1"><stop offset="0" stop-color="#b4b4b4"/><stop offset="1" stop-color="#9c9c9c"/></linearGradient></defs>
<rect x="384.2" y="51.4" width="360" height="11.8" fill="#8a8a8a"/>
<rect x="384.2" y="51.6" width="14" height="11.4" fill="url(#tg2)"/>
<path d="M391 54.6l-3 3 3 3z" fill="#b8b8b8" stroke="#8a8a8a" stroke-width="0.6"/>
<path d="M395.6 63.2l10.6-11h142l-2 11z" fill="url(#tg)" stroke="#5e5e5e" stroke-width="0.7"/>
<path d="M688 63.2l3-10.6q0.4-0.6 1.2-0.6h39.2q1.2 0 1.2 1.2v10z" fill="url(#tg)" stroke="#5a5a5a" stroke-width="0.7"/>
<rect x="733.2" y="51.6" width="9.4" height="11.4" fill="url(#tg2)"/><path d="M735.6 54.4l3.4 3.2-3.4 3.2z" fill="#c8c8c8" stroke="#8a8a8a" stroke-width="0.5"/>
<rect x="384.4" y="63" width="359.4" height="2" fill="#f4f4f4"/>
<path d="M545.6 64l10.4-11.6q0.6-0.8 1.6-0.8h131q1.4 0 1.4 1.4v11z" fill="#ffffff"/>
<path d="M681.4 55l4.6 4.8M686 55l-4.6 4.8" stroke="#555" stroke-width="0.9"/>
</svg>
<span class="t" style="left:412.2px;top:52.6px;color:#e4e4e4;font-size:7.5px;letter-spacing:-0.17px">Anti Collision Example (WellRender).voxb*</span>
<span class="t" style="left:561px;top:52.6px;color:#111;font-size:7.3px;font-weight:bold;letter-spacing:-0.27px">Dissolved Solids (VolRender).voxb*</span>
<span class="t" style="left:697.6px;top:52.6px;color:#dcdcdc;font-size:7.5px;letter-spacing:-0.25px">Vortex (...</span>
<div class="abs" style="left:384.4px;top:63.6px;width:359.4px;height:400.2px;background:#f2f2f2;"></div>
<div class="abs" style="left:386.5px;top:64.8px;width:355.5px;height:397.4px;background:#000;"></div>
<svg style="left:386.5px;top:64.8px" width="355.5" height="397.4" viewBox="386.5 64.8 355.5 397.4">
<defs>
<clipPath id="vclip"><rect x="386.5" y="64.8" width="355.5" height="397.4"/></clipPath>
<clipPath id="vol"><path d="M449 118.4L589.5 155.8 732.5 266 684.5 360.4 475.4 353.4 432.6 196z"/></clipPath>
<clipPath id="leftface"><path d="M432.6 196L449 192 464 235 474 278 484 305 490 335 486 353.6 475.4 353.4z"/></clipPath>
<filter id="b2" x="-30%" y="-30%" width="160%" height="160%"><feGaussianBlur stdDeviation="2"/></filter>
<filter id="b1" x="-30%" y="-30%" width="160%" height="160%"><feGaussianBlur stdDeviation="1"/></filter>
<filter id="b4" x="-30%" y="-30%" width="160%" height="160%"><feGaussianBlur stdDeviation="4"/></filter>
<filter id="b7" x="-40%" y="-40%" width="180%" height="180%"><feGaussianBlur stdDeviation="7"/></filter>
<filter id="b12" x="-50%" y="-50%" width="200%" height="200%"><feGaussianBlur stdDeviation="12"/></filter>
<linearGradient id="botg" gradientUnits="userSpaceOnUse" x1="590" y1="294" x2="584" y2="359"><stop offset="0" stop-color="#c02818" stop-opacity="0.0"/><stop offset="0.2" stop-color="#c03418" stop-opacity="0.7"/><stop offset="0.38" stop-color="#bc5c18" stop-opacity="0.9"/><stop offset="0.52" stop-color="#b08c1c"/><stop offset="0.64" stop-color="#84881c"/><stop offset="0.75" stop-color="#4a7818"/><stop offset="0.88" stop-color="#286214"/><stop offset="1" stop-color="#0a440c"/></linearGradient>
<linearGradient id="leftg" gradientUnits="userSpaceOnUse" x1="440" y1="196" x2="478" y2="352"><stop offset="0" stop-color="#d8cc20"/><stop offset="0.1" stop-color="#b0c020"/><stop offset="0.2" stop-color="#30a030"/><stop offset="0.32" stop-color="#1c5c98"/><stop offset="0.46" stop-color="#203c8c"/><stop offset="0.56" stop-color="#185a40"/><stop offset="0.75" stop-color="#2e5418"/><stop offset="0.92" stop-color="#3c5a18"/><stop offset="1" stop-color="#5a7a1c"/></linearGradient>
<linearGradient id="cbar" x1="0" y1="0" x2="1" y2="0"><stop offset="0" stop-color="#9468ff"/><stop offset="0.1" stop-color="#6a4cff"/><stop offset="0.2" stop-color="#3a2cf8"/><stop offset="0.225" stop-color="#1c2490"/><stop offset="0.25" stop-color="#0c7a20"/><stop offset="0.3" stop-color="#18e000"/><stop offset="0.38" stop-color="#90ff00"/><stop offset="0.47" stop-color="#ffff00"/><stop offset="0.58" stop-color="#ffc000"/><stop offset="0.7" stop-color="#ff8000"/><stop offset="0.85" stop-color="#ff3800"/><stop offset="1" stop-color="#ff0800"/></linearGradient>
</defs>
<g clip-path="url(#vclip)">
<g clip-path="url(#vol)">
<rect x="420" y="100" width="330" height="270" fill="#864ccc"/>
<path d="M440 110L592 148 745 262 720 290 640 215 585 190 500 165 446 158z" fill="#5444e4" filter="url(#b7)"/>
<path d="M446 116L592 152 660 205 560 172 450 140z" fill="#5a48ea" filter="url(#b4)"/>
<ellipse cx="690" cy="270" rx="45" ry="50" fill="#5a4ee6" filter="url(#b12)"/>
<ellipse cx="640" cy="212" rx="30" ry="14" fill="#5a52e6" transform="rotate(38 640 212)" filter="url(#b7)"/>
<ellipse cx="570" cy="255" rx="70" ry="30" fill="#9a52d0" transform="rotate(12 570 255)" filter="url(#b12)"/>
<ellipse cx="520" cy="215" rx="55" ry="14" fill="#9850cc" transform="rotate(14 520 215)" filter="url(#b7)"/>
<ellipse cx="590" cy="205" rx="45" ry="9" fill="#7a4ee0" transform="rotate(16 590 205)" filter="url(#b4)"/>
<path d="M452 146C500 150 560 172 640 212" fill="none" stroke="#7c7ae6" stroke-width="9" filter="url(#b4)" opacity="0.7"/>
<ellipse cx="503" cy="171" rx="30" ry="6" fill="#8646c6" transform="rotate(13 503 171)" filter="url(#b2)" opacity="0.8"/>
<ellipse cx="566" cy="186" rx="34" ry="6.5" fill="#8a48c8" transform="rotate(15 566 186)" filter="url(#b2)" opacity="0.8"/>
<ellipse cx="532" cy="198" rx="40" ry="7" fill="#7e44c4" transform="rotate(14 532 198)" filter="url(#b2)" opacity="0.75"/>
<ellipse cx="596" cy="214" rx="44" ry="8" fill="#9048c4" transform="rotate(16 596 214)" filter="url(#b2)" opacity="0.7"/>
<ellipse cx="545" cy="232" rx="40" ry="9" fill="#7a4cd8" transform="rotate(12 545 232)" filter="url(#b4)" opacity="0.7"/>
<ellipse cx="585" cy="258" rx="48" ry="12" fill="#9a58d6" transform="rotate(8 585 258)" filter="url(#b4)" opacity="0.7"/>
<path d="M470 166C500 176 530 190 560 212" fill="none" stroke="#6a52dc" stroke-width="4" filter="url(#b2)" opacity="0.6"/>
<ellipse cx="618" cy="203" rx="18" ry="5" fill="#58b0b8" transform="rotate(28 618 203)" filter="url(#b2)" opacity="0.7"/>
<ellipse cx="592" cy="184" rx="12" ry="5" fill="#8a90c8" transform="rotate(60 592 184)" filter="url(#b2)" opacity="0.6"/>
<ellipse cx="676" cy="237" rx="13" ry="6" fill="#60c0a0" transform="rotate(40 676 237)" filter="url(#b2)" opacity="0.75"/>
<ellipse cx="697" cy="274" rx="6" ry="13" fill="#50c078" transform="rotate(-20 697 274)" filter="url(#b2)" opacity="0.65"/>
<ellipse cx="665" cy="290" rx="22" ry="8" fill="#70c890" transform="rotate(30 665 290)" filter="url(#b4)" opacity="0.75"/>
<ellipse cx="640" cy="262" rx="16" ry="5" fill="#80b8c0" transform="rotate(30 640 262)" filter="url(#b4)" opacity="0.7"/>
<ellipse cx="683" cy="298" rx="25" ry="12" fill="#78b050" filter="url(#b4)" opacity="0.85"/>
<ellipse cx="629" cy="218" rx="18" ry="6" fill="#a23c9c" transform="rotate(12 629 218)" filter="url(#b1)"/>
<ellipse cx="630" cy="216" rx="11" ry="2" fill="#c060b8" transform="rotate(12 630 216)" filter="url(#b1)"/>
<ellipse cx="652" cy="241" rx="9" ry="3" fill="#a03898" transform="rotate(8 652 241)" filter="url(#b1)"/>
<ellipse cx="667" cy="259" rx="17" ry="6.5" fill="#983898" transform="rotate(10 667 259)" filter="url(#b1)"/>
<ellipse cx="640" cy="240" rx="3" ry="2" fill="#903090" filter="url(#b1)"/>
<path d="M456 172L470 204 484 250 500 300 560 312 640 318 690 330" fill="none" stroke="#d83828" stroke-width="22" stroke-linecap="round" stroke-linejoin="round" filter="url(#b7)" opacity="0.7"/>
<ellipse cx="520" cy="312" rx="60" ry="30" fill="#cc2018" filter="url(#b7)"/>
<path d="M442 160L454 153 462 162 471 165 474 178 483 186 481 200 487 210 484 226 490 244 499 262 514 278 540 290 548 310 520 330 484 326 476 290 470 250 464 222 452 200 441 176z" fill="#c41616" filter="url(#b1)"/>
<path d="M476 292c20-12 50-8 66 6s20 26-6 34s-52 0-58-14z" fill="#c81a1a" filter="url(#b2)"/>
<path d="M450 166l8 4-2 10 8 4 0 10 8 6-2 12 6 6-2 20 6 16" fill="none" stroke="#4a0606" stroke-width="2.2" filter="url(#b1)" opacity="0.85"/>
<path d="M464 172l8 14 4 18 4 26 10 26 16 20" fill="none" stroke="#ee3c3c" stroke-width="3" filter="url(#b2)" opacity="0.75"/>
<path d="M478 296c6 16 20 26 44 26s36-8 42-16" fill="none" stroke="#701010" stroke-width="2.6" filter="url(#b2)" opacity="0.7"/>
<ellipse cx="512" cy="320" rx="20" ry="4.6" fill="#ec5050" filter="url(#b2)" opacity="0.75"/>
<path d="M486 250c8 10 6 30 18 40" fill="none" stroke="#5a0a0a" stroke-width="2.4" filter="url(#b2)" opacity="0.6"/>
<path d="M505 226c20-6 40 6 52 26s40 26 90 30l-10 18c-40-6-80-2-100-16s-28-34-32-58z" fill="#8c48c8" filter="url(#b4)" opacity="0.85"/>
<path d="M560 288c30-12 60-8 80-2s30 8 50 6v12H590z" fill="#a04898" filter="url(#b4)" opacity="0.7"/>
<path d="M530 280c40 6 100 2 170 20v22H510z" fill="#a42c48" filter="url(#b4)" opacity="0.85"/>
<path d="M620 298c30 0 50 4 80 12v16H610z" fill="#c86428" filter="url(#b4)" opacity="0.8"/>
<path d="M474 224L498 238 522 264 560 281 610 282 640 300 636 332 476 332z" fill="#b41a1c" filter="url(#b4)" opacity="0.92"/>
<path d="M498 240L522 266 560 283 612 283" fill="none" stroke="#a83a90" stroke-width="5" filter="url(#b2)" opacity="0.55"/>
<path d="M470 300L496 287 712 312 686 362 474 355z" fill="url(#botg)"/>
<ellipse cx="530" cy="314" rx="62" ry="17" fill="#bc1818" filter="url(#b4)" opacity="0.85"/>
<ellipse cx="512" cy="321" rx="20" ry="4.6" fill="#e84c4c" filter="url(#b2)" opacity="0.7"/>
<path d="M480 300c6 16 20 28 44 28s36-8 42-16" fill="none" stroke="#681010" stroke-width="2.4" filter="url(#b2)" opacity="0.6"/>
<path d="M476 300l14 0 8 30 40 26-62-2z" fill="#2c4a14" filter="url(#b4)" opacity="0.8"/>
<ellipse cx="668" cy="330" rx="26" ry="12" fill="#a8b020" filter="url(#b4)" opacity="0.7"/>
<path d="M668 322L706 318 686 358 672 350z" fill="#5c9a20" filter="url(#b4)" opacity="0.85"/>
<ellipse cx="690" cy="312" rx="16" ry="8" fill="#90b030" filter="url(#b4)" opacity="0.8"/>
<g clip-path="url(#leftface)"><rect x="425" y="185" width="80" height="175" fill="url(#leftg)" filter="url(#b2)"/></g>
<ellipse cx="451" cy="131.5" rx="5" ry="3.6" fill="#e0c030" filter="url(#b2)"/><ellipse cx="452" cy="146" rx="10" ry="8" fill="#3cb078" filter="url(#b4)" opacity="0.7"/>
<path d="M440 150l12-4 4 8-4 12-14 4z" fill="#38c444" filter="url(#b2)" opacity="0.95"/><path d="M435 172l11-6 4 8-3 18-14 4z" fill="#e8c820" filter="url(#b2)"/>
<path d="M447 168l8 2 2 10-8 2z" fill="#e07820" filter="url(#b2)" opacity="0.8"/>
</g>
<g fill="none" stroke="#e8e428" stroke-width="0.8" opacity="0.92">
<path d="M432.6 196L475.4 352.6"/>
<path d="M437.4 213.4l22 3.5"/>
<path d="M442.1 230.8l22 3.5"/>
<path d="M446.9 248.2l22 3.5"/>
<path d="M451.6 265.6l22 3.5"/>
<path d="M456.4 283.0l25 4.0"/>
<path d="M461.1 300.4l25 4.0"/>
<path d="M465.9 317.8l25 4.0"/>
<path d="M470.6 335.2l25 4.0"/>
<path d="M432.6 196l14 3"/>
<path d="M496 289L709 313.5"/>
<path d="M489 307L701 327.5"/>
<path d="M484.4 322.6L695 338.5"/>
<path d="M480.6 334L690.5 347.6"/>
<path d="M478 343.4L687.5 354"/>
<path d="M475.4 353.4L496 289"/>
<path d="M512 354.6L535 293.5"/>
<path d="M546 355.8L571 297.6"/>
<path d="M578 356.8L603 301.2"/>
<path d="M609 357.9L633 304.7"/>
<path d="M637 358.8L660 307.8"/>
<path d="M662 359.7L684.5 310.6"/>
<path d="M512 354.6l-9 -19" opacity="0.8"/>
<path d="M546 355.8l-9 -19" opacity="0.8"/>
<path d="M578 356.8l-9 -19" opacity="0.8"/>
<path d="M609 357.9l-9 -19" opacity="0.8"/>
<path d="M637 358.8l-9 -19" opacity="0.8"/>
<path d="M662 359.7l-9 -19" opacity="0.8"/>
<path d="M613.5 320L635.5 355" opacity="0.7"/>
<path d="M640 262l40 36M660 250l36 34M690 262l-22 40M710 285l-20 40" stroke-dasharray="3 3" opacity="0.3"/>
</g>
<path d="M648.5 319L683 358" stroke="#e04018" stroke-width="1.5" opacity="0.9"/>
<path d="M476 352.8L685.4 357.9 685.4 361.7 476 358.7z" fill="#12e612"/>
<path d="M457.4 355.5L477 351.4 477 360.2z" fill="#12e612"/>
<path d="M682 360.4L735 263.8 739 266 686.6 361.8z" fill="#1424f0"/>
<path d="M742 255L731.4 264.6 740 269.6z" fill="#1424f0"/>
<text x="0" y="0" transform="translate(477.4 364.6) rotate(72)" text-anchor="middle" dominant-baseline="central" font-family="Liberation Sans,sans-serif" font-size="6.6" font-weight="bold" fill="#1fe01f">350</text>
<text x="0" y="0" transform="translate(515.2 365.5) rotate(72)" text-anchor="middle" dominant-baseline="central" font-family="Liberation Sans,sans-serif" font-size="6.6" font-weight="bold" fill="#1fe01f">300</text>
<text x="0" y="0" transform="translate(549 366.1) rotate(72)" text-anchor="middle" dominant-baseline="central" font-family="Liberation Sans,sans-serif" font-size="6.6" font-weight="bold" fill="#1fe01f">250</text>
<text x="0" y="0" transform="translate(582 366.7) rotate(72)" text-anchor="middle" dominant-baseline="central" font-family="Liberation Sans,sans-serif" font-size="6.6" font-weight="bold" fill="#1fe01f">200</text>
<text x="0" y="0" transform="translate(611.4 367) rotate(72)" text-anchor="middle" dominant-baseline="central" font-family="Liberation Sans,sans-serif" font-size="6.6" font-weight="bold" fill="#1fe01f">150</text>
<text x="0" y="0" transform="translate(639 367.2) rotate(72)" text-anchor="middle" dominant-baseline="central" font-family="Liberation Sans,sans-serif" font-size="6.6" font-weight="bold" fill="#1fe01f">100</text>
<text x="0" y="0" transform="translate(663 366.4) rotate(72)" text-anchor="middle" dominant-baseline="central" font-family="Liberation Sans,sans-serif" font-size="6.6" font-weight="bold" fill="#1fe01f">50</text>
<text x="0" y="0" transform="translate(687.6 363.6) rotate(72)" text-anchor="middle" dominant-baseline="central" font-family="Liberation Sans,sans-serif" font-size="6.6" font-weight="bold" fill="#1fe01f">0</text>
<text x="501.6" y="424" font-family="Liberation Sans,sans-serif" font-size="12" letter-spacing="0.02" fill="#fff">Total Dissolved Solids (micrograms/L)</text>
<rect x="516.8" y="429.2" width="167.5" height="16.2" fill="url(#cbar)" stroke="#fff" stroke-width="0.8"/>
<path d="M517.3 445.4v2" stroke="#fff" stroke-width="0.6"/>
<text x="517.3" y="455.2" text-anchor="middle" font-family="Liberation Sans,sans-serif" font-size="6.8" fill="#f2f2f2">32</text>
<path d="M559.2 445.4v2" stroke="#fff" stroke-width="0.6"/>
<text x="559.2" y="455.2" text-anchor="middle" font-family="Liberation Sans,sans-serif" font-size="6.8" fill="#f2f2f2">774</text>
<path d="M600.6 445.4v2" stroke="#fff" stroke-width="0.6"/>
<text x="600.6" y="455.2" text-anchor="middle" font-family="Liberation Sans,sans-serif" font-size="6.8" fill="#f2f2f2">1516</text>
<path d="M642.4 445.4v2" stroke="#fff" stroke-width="0.6"/>
<text x="642.4" y="455.2" text-anchor="middle" font-family="Liberation Sans,sans-serif" font-size="6.8" fill="#f2f2f2">2258</text>
<path d="M684 445.4v2" stroke="#fff" stroke-width="0.6"/>
<text x="684" y="455.2" text-anchor="middle" font-family="Liberation Sans,sans-serif" font-size="6.8" fill="#f2f2f2">3000</text>
<path d="M709 433.6L716.6 413" stroke="#2c36c8" stroke-width="1.3"/><path d="M718.2 408.6l-4.2 7.4 4.8 1.6z" fill="#2c36c8"/>
<path d="M709 433.6L691 431.4" stroke="#1c8a24" stroke-width="1.5"/><path d="M684.6 430.6l7.4-2.8 -0.4 5.6z" fill="#1c9a24"/>
<path d="M709 433.6L705 428" stroke="#a82828" stroke-width="1.3"/><path d="M702.6 424.4l4.6 2.4-3.4 2.6z" fill="#b03030"/>
<text x="719.6" y="408.8" font-family="Liberation Sans,sans-serif" font-size="6.4" fill="#d0b820">z</text>
<text x="703.2" y="424" font-family="Liberation Sans,sans-serif" font-size="6.4" fill="#d0b820">x</text>
<text x="683.4" y="429" font-family="Liberation Sans,sans-serif" font-size="6.4" fill="#d0b820">y</text>
</g>
</svg>
<div id="editmenu">
<div class="abs" style="left:15.8px;top:1px;width:0.7px;height:121px;background:#e2e2e2"></div>
<div class="msep" style="top:45px"></div>
<div class="msep" style="top:92px"></div>
<span class="t" style="left:19.200000000000003px;top:3.5px">Undo Move Module</span>
<span class="t" style="right:7.5px;top:3.5px">Ctrl+Z</span>
<span class="t dis" style="left:19.200000000000003px;top:17.2px">Redo</span>
<span class="t dis" style="right:7.5px;top:17.2px">Ctrl+Y</span>
<span class="t" style="left:19.200000000000003px;top:30.8px">Clear Undo History</span>
<span class="t" style="left:19.200000000000003px;top:49.7px">Copy</span>
<span class="t" style="right:7.5px;top:49.7px">Ctrl+C</span>
<span class="t dis" style="left:19.200000000000003px;top:63.4px">Paste</span>
<span class="t dis" style="right:7.5px;top:63.4px">Ctrl+V</span>
<span class="t" style="left:19.200000000000003px;top:77.1px">Delete</span>
<span class="t" style="right:7.5px;top:77.1px">Delete</span>
<span class="t" style="left:19.200000000000003px;top:96.2px">Delete All</span>
<span class="t" style="right:7.5px;top:96.2px">Ctrl+Delete</span>
<span class="t" style="left:19.200000000000003px;top:109.8px">Rename...</span>
<span class="t" style="right:7.5px;top:109.8px">F2</span>
<svg style="left:0;top:0" width="18" height="123" viewBox="45 33 18 123">
<path d="M47.6 40.6l4.4-3.4v2.2c4 0 5.8 2.4 5.8 6.2c-1-2.4-2.6-3.4-5.8-3.4v2z" fill="#2f80d4"/>
<path d="M57.8 53.8l-4.4-3.4v2.2c-4 0-5.8 2.4-5.8 6.2c1-2.4 2.6-3.4 5.8-3.4v2z" fill="#a9d3f0"/>
<path d="M48.6 66l2.6-2.2v1.4c2.6 0 3.8 1.4 3.8 3.4c-0.8-1.2-1.8-1.8-3.8-1.8v1.2z" fill="#2f80d4"/><circle cx="51" cy="70.8" r="2.6" fill="#f2f2f2" stroke="#888" stroke-width="0.6"/><path d="M51 69.4v1.6h1.2" stroke="#555" stroke-width="0.5" fill="none"/><circle cx="54.6" cy="71.6" r="2.1" fill="#e02a2a"/><path d="M53.6 71.6h2" stroke="#fff" stroke-width="0.7"/>
<rect x="47.6" y="83.4" width="5.2" height="6.6" rx="0.6" fill="#f6f6f6" stroke="#777" stroke-width="0.7"/><rect x="51" y="85.8" width="5.4" height="6.8" rx="0.6" fill="#f6f6f6" stroke="#777" stroke-width="0.7"/>
<rect x="47.6" y="97.4" width="7" height="8.6" rx="0.6" fill="#e6d4b4"/><rect x="49.6" y="96.4" width="3" height="1.8" fill="#c8c8c8"/><rect x="51" y="99.6" width="5.2" height="6.8" fill="#f2f2f2" stroke="#cfcfcf" stroke-width="0.5"/>
<path d="M48.2 111.8l6.4 6.8M54.6 111.8l-6.4 6.8" stroke="#e8262a" stroke-width="2"/>
<rect x="47.8" y="129.8" width="4.4" height="5.2" fill="#fff" stroke="#d03030" stroke-width="0.8"/><rect x="50.2" y="132.2" width="4.4" height="5.2" fill="#fff" stroke="#d03030" stroke-width="0.8"/><circle cx="55" cy="138" r="2.1" fill="#e02a2a"/><path d="M54 138h2" stroke="#fff" stroke-width="0.7"/>
<path d="M48 152l0.8-2.6 6-6 1.8 1.8-6 6z" fill="#f4b63a" stroke="#c07a18" stroke-width="0.5"/><path d="M48 152l0.8-2.6 1.8 1.8z" fill="#444"/><path d="M54.2 144l1.8 1.8" stroke="#d05030" stroke-width="1"/>
</svg>
</div>
<div class="abs" style="left:143px;top:44.6px;font-size:19.5px;font-weight:bold;letter-spacing:-1.3px;line-height:22px;color:rgba(255,255,255,0.3);text-shadow:0 0 1.5px rgba(120,120,120,0.25);white-space:nowrap;">SOFTPEDIA</div>
<div id="status">
<span class="t" style="left:3px;top:2.6px;font-size:7.2px;letter-spacing:-0.17px">For Help, press F1</span>
<span class="t" style="left:596px;top:2.6px;font-size:7.2px;letter-spacing:-0.04px">Window size = 566x632</span>
<svg style="left:728px;top:3px" width="10" height="9" viewBox="0 0 10 9"><g fill="#8a8a8a"><rect x="7" y="1" width="1.2" height="1.2"/><rect x="5" y="3.4" width="1.2" height="1.2"/><rect x="7" y="3.4" width="1.2" height="1.2"/><rect x="3" y="5.8" width="1.2" height="1.2"/><rect x="5" y="5.8" width="1.2" height="1.2"/><rect x="7" y="5.8" width="1.2" height="1.2"/></g></svg>
</div>
</div>
</body>
</html>
